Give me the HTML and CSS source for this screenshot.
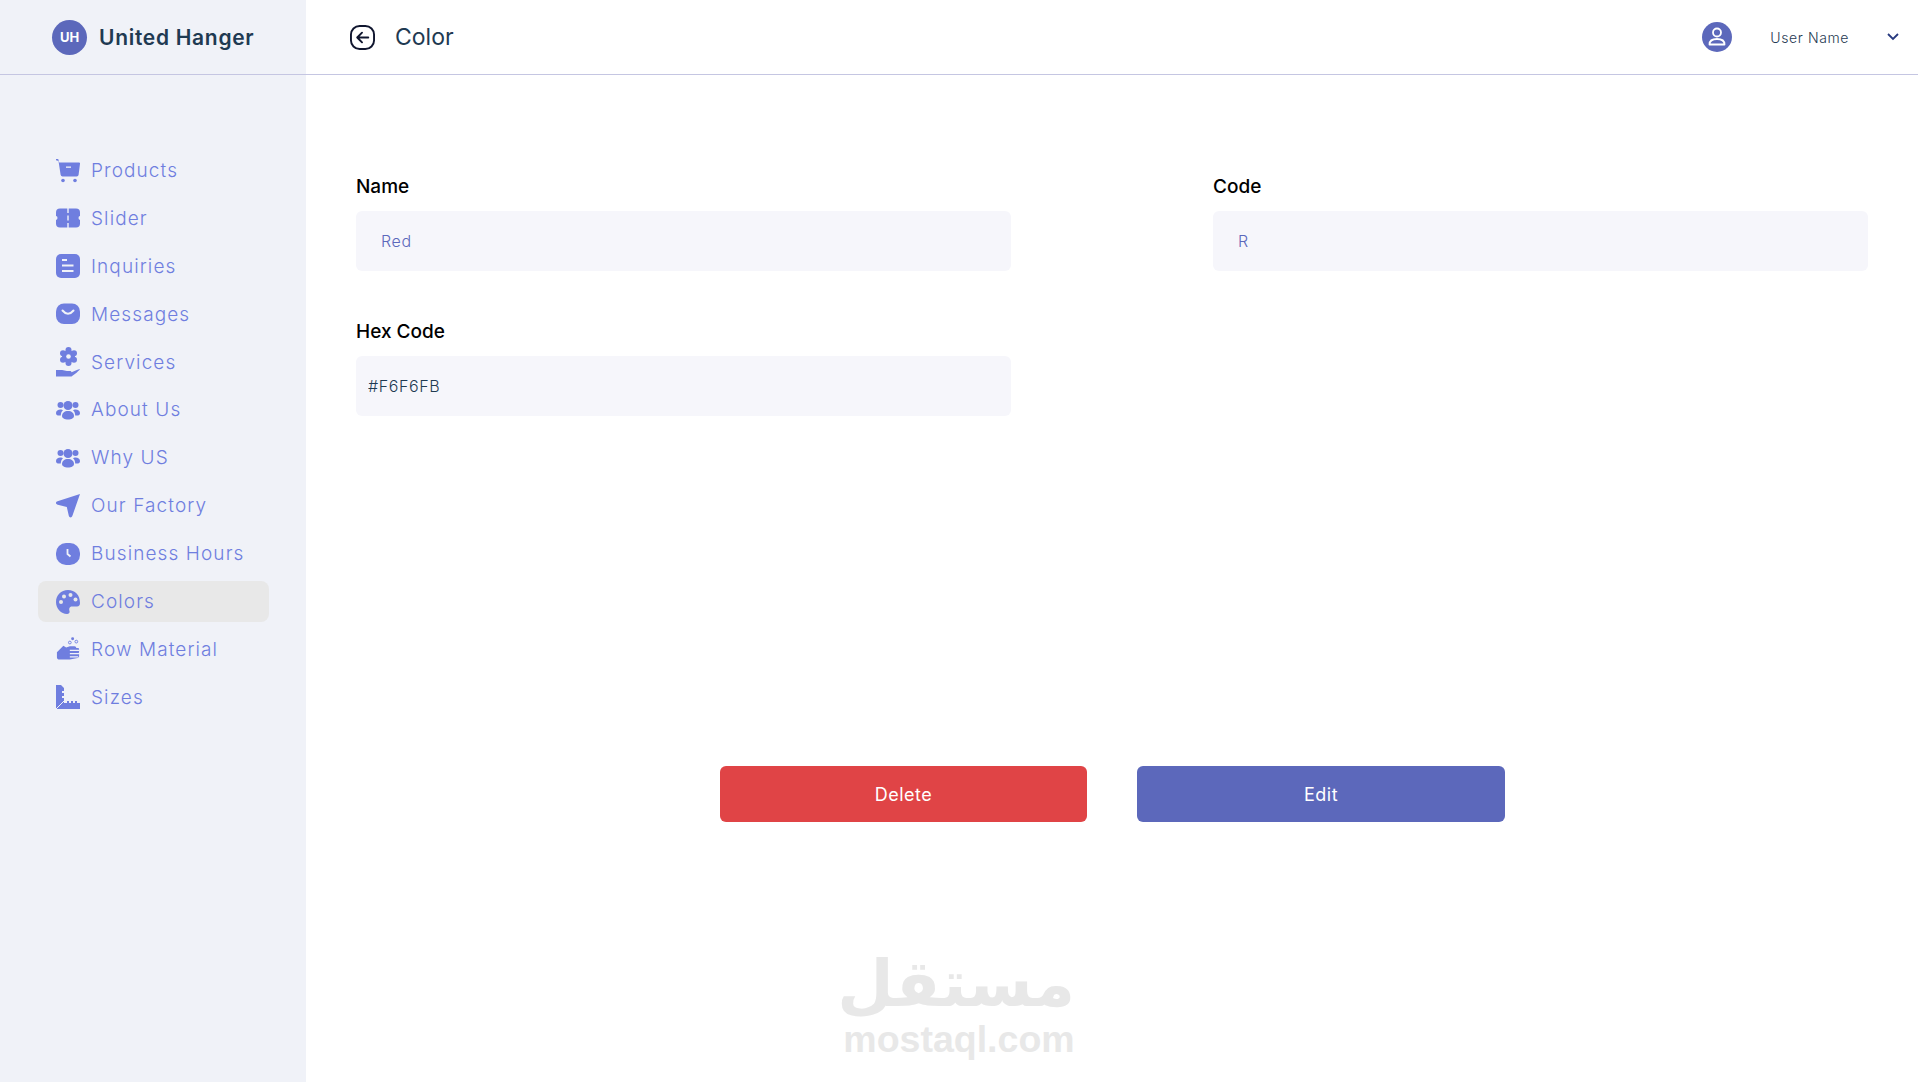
FILE: index.html
```html
<!DOCTYPE html>
<html lang="en">
<head>
  <meta charset="UTF-8">
  <meta name="viewport" content="width=device-width, initial-scale=1.0">
  <title>Color | United Hanger</title>
  <link rel="stylesheet" href="styles.css">
</head>
<body>
  <div class="app">
    <aside class="sidebar">
      <div class="brand">
        <span class="brand-logo">UH</span>
        <span class="brand-name">United Hanger</span>
      </div>
      <nav class="menu">
        <a class="menu-item" href="#">
          <svg class="menu-icon" viewBox="0 0 24 24"><path d="M0 0h2.200l1 3.500H23a1 1 0 0 1 1 1.200l-1.400 11a2 2 0 0 1-2 1.800H6.600a2 2 0 0 1-2-1.700L2.500 2 0 1.200z"/><rect x="10" y="7.500" width="5" height="1.300" fill="#f0f2f8"/><circle cx="7" cy="21.500" r="1.800"/><circle cx="19" cy="21.500" r="1.800"/></svg>
          Products
        </a>
        <a class="menu-item" href="#">
          <svg class="menu-icon" viewBox="0 0 24 24"><rect y="2.500" width="24" height="19" rx="4"/><g fill="#f0f2f8"><circle cx="-.5" cy="12" r="2"/><circle cx="24.500" cy="12" r="2"/><rect x="11.300" y="2" width="1.400" height="5"/><rect x="11.300" y="9.500" width="1.400" height="5"/><rect x="11.300" y="17" width="1.400" height="5"/></g></svg>
          Slider
        </a>
        <a class="menu-item" href="#">
          <svg class="menu-icon" viewBox="0 0 24 24"><rect width="24" height="24" rx="5"/><path d="M6 5h5v2H6zM6 10.500h11.500v2H6zM6 16h11.500v2H6z" fill="#f0f2f8"/></svg>
          Inquiries
        </a>
        <a class="menu-item" href="#">
          <svg class="menu-icon" viewBox="0 0 24 24"><rect y="1.500" width="24" height="20.500" rx="8"/><path d="M6.500 8.500Q12 15 17.500 8.500" fill="none" stroke="#f0f2f8" stroke-width="2" stroke-linecap="round"/></svg>
          Messages
        </a>
        <a class="menu-item" href="#">
          <svg class="menu-icon menu-icon-tall" viewBox="0 0 24 30"><g><circle cx="12.500" cy="9.500" r="6.500"/><circle cx="12.500" cy="3" r="3"/><circle cx="12.500" cy="16" r="3"/><circle cx="7" cy="6.200" r="3"/><circle cx="18" cy="6.200" r="3"/><circle cx="7" cy="12.800" r="3"/><circle cx="18" cy="12.800" r="3"/></g><circle cx="12.500" cy="9.500" r="2.300" fill="#f0f2f8"/><path d="M0 23h6c2 0 3 1 5 1h3c1 0 1.500 .6 1.500 1.300l6-2.600 2.500-.7c-.5 1.500-5 5-8.500 7.500H0z"/></svg>
          Services
        </a>
        <a class="menu-item" href="#">
          <svg class="menu-icon" viewBox="0 0 24 24"><use href="#people"/></svg>
          About Us
        </a>
        <a class="menu-item" href="#">
          <svg class="menu-icon" viewBox="0 0 24 24"><use href="#people"/></svg>
          Why US
        </a>
        <a class="menu-item" href="#">
          <svg class="menu-icon" viewBox="0 0 24 24"><path d="M24 0 16.500 21.500c-.8 2.500-3 2.500-3.700 .2L10.800 13 1.800 10.700C-.6 10-.6 8 1.500 7.200z"/></svg>
          Our Factory
        </a>
        <a class="menu-item" href="#">
          <svg class="menu-icon" viewBox="0 0 24 24"><rect y="1" width="24" height="22" rx="10"/><path d="M11.500 7v5l3 2.500" fill="none" stroke="#f0f2f8" stroke-width="1.800"/></svg>
          Business Hours
        </a>
        <a class="menu-item is-active" href="#">
          <svg class="menu-icon" viewBox="0 0 24 24"><path d="M12 0C5 0 0 5.200 0 12s5.200 12 11 12c2 0 3-1.400 2.500-3-.6-2-.3-4.500 2.500-4.500h5c2 0 3-1.500 3-3.500C24 5 19 0 12 0z"/><g fill="#e8e8e8"><circle cx="5" cy="12" r="2"/><circle cx="8" cy="6.500" r="2"/><circle cx="14.500" cy="5" r="2"/><circle cx="19.500" cy="9.500" r="2"/></g></svg>
          Colors
        </a>
        <a class="menu-item" href="#">
          <svg class="menu-icon" viewBox="0 0 24 26"><path d="M0 16.500 7 9.500l3 2 4-1.500h5q2 .3 2 2h2q1 0 1 1.500v2.500q0 1-.5 1.500.5.500.5 1.500v2q-1 2-3 2l-7 1.500H3q-3 0-3-2.500z"/><path d="M14 14.500h10M14 18h10M14 21.500h9" stroke="#f0f2f8" stroke-width="1.200"/><circle cx="17" cy="1.800" r="1.600"/><circle cx="14" cy="6" r="1.500" fill="none" stroke="#6f7edf"/><circle cx="21" cy="5" r="1.500" fill="none" stroke="#6f7edf"/></svg>
          Row Material
        </a>
        <a class="menu-item" href="#">
          <svg class="menu-icon" viewBox="0 0 24 24"><path d="M0 0H5L8 3V6H6V8H8V11H6V13H8V18H11V16H13V18H15V16H17V18H19V16H21V18H24V24H0z"/><path d="M0 24 8 16" stroke="#f0f2f8" stroke-width="1"/></svg>
          Sizes
        </a>
      </nav>
    </aside>

    <div class="content">
      <header class="topbar">
        <div class="page-title">
          <svg class="back-icon" viewBox="0 0 26 26"><rect x="1" y="1" width="24" height="24" rx="9"/><path d="M19 13H7.500M12.500 8l-5 5 5 5"/></svg>
          <h1>Color</h1>
        </div>
        <div class="user">
          <svg class="user-icon" viewBox="0 0 30 30"><circle cx="15" cy="15" r="15" fill="#5c68bb"/><circle cx="15" cy="10.500" r="4" fill="none" stroke="#fff" stroke-width="1.800"/><path d="M7.500 22.500c0-3.500 3-5.500 7.500-5.500s7.500 2 7.500 5.500z" fill="none" stroke="#fff" stroke-width="1.800" stroke-linejoin="round"/></svg>
          <span class="user-name">User Name</span>
          <svg class="chevron" viewBox="0 0 12 8"><path d="M1 1l5 5 5-5"/></svg>
        </div>
      </header>

      <main class="form-page">
        <div class="form-grid">
          <div class="field">
            <label for="name">Name</label>
            <input class="is-accent" id="name" type="text" value="Red" readonly>
          </div>
          <div class="field">
            <label for="code">Code</label>
            <input class="is-accent" id="code" type="text" value="R" readonly>
          </div>
          <div class="field">
            <label for="hex">Hex Code</label>
            <input id="hex" type="text" value="#F6F6FB" readonly>
          </div>
        </div>
        <div class="actions">
          <button class="btn btn-delete">Delete</button>
          <button class="btn btn-edit">Edit</button>
        </div>
      </main>
    </div>
  </div>

  <div class="watermark">
    <div class="watermark-ar" lang="ar" dir="rtl">مستقل</div>
    <div class="watermark-en">mostaql.com</div>
  </div>

  <svg class="icon-defs" width="0" height="0">
    <symbol id="people" viewBox="0 0 24 24">
      <circle cx="12" cy="7.500" r="4.500"/>
      <circle cx="4.500" cy="7" r="3"/>
      <circle cx="19.500" cy="7" r="3"/>
      <path d="M0 15c0-2 2-3.500 4.500-3.500 1 0 2 .3 2.500.8-1.500 1.200-2.200 3-2.200 5.200H2c-1.200 0-2-1-2-2.500z"/>
      <path d="M24 15c0-2-2-3.500-4.500-3.500-1 0-2 .3-2.500.8 1.500 1.200 2.200 3 2.200 5.200H22c1.200 0 2-1 2-2.500z"/>
      <path d="M6 18c0-3 2.500-5 6-5s6 2 6 5c0 2-2.500 3.500-6 3.500S6 20 6 18z"/>
    </symbol>
  </svg>
</body>
</html>
```

FILE: styles.css
```css
* {
  box-sizing: border-box;
}
body {
  margin: 0;
  background-color: #fff;
  font-family: 'Inter', sans-serif;
  color: #1f3a52;
}
.app {
  display: flex;
  height: 1082px;
  overflow: hidden;
}
.sidebar {
  width: 306px;
  flex-shrink: 0;
  background-color: #f0f2f8;
}
.brand {
  display: flex;
  align-items: center;
  gap: 12px;
  height: 75px;
  padding-left: 52px;
  border-bottom: 1px solid #c5c6e2;
}
.brand-logo {
  display: flex;
  align-items: center;
  justify-content: center;
  width: 35px;
  height: 35px;
  border-radius: 50%;
  background-color: #5c68bb;
  color: #fff;
  font-size: 13px;
  font-weight: 700;
}
.brand-name {
  font-size: 21px;
  font-weight: 600;
  letter-spacing: 0.7px;
}
.menu {
  display: flex;
  flex-direction: column;
  gap: 6.9px;
  padding: 75px 37px 0 38px;
}
.menu-item {
  display: flex;
  align-items: center;
  gap: 11px;
  height: 41px;
  padding-left: 18px;
  border-radius: 8px;
  color: #6f7edf;
  font-size: 19px;
  font-weight: 300;
  letter-spacing: 1.1px;
  text-decoration: none;
}
.menu-item.is-active {
  background-color: #e8e8e8;
}
.menu-icon {
  width: 24px;
  height: 24px;
  flex-shrink: 0;
  fill: #6f7edf;
}
.menu-icon-tall {
  height: 30px;
}
.content {
  flex: 1;
  min-width: 0;
}
.topbar {
  display: flex;
  align-items: center;
  justify-content: space-between;
  height: 75px;
  padding: 0 19px 0 44px;
  border-bottom: 1px solid #c5c6e2;
}
.page-title {
  display: flex;
  align-items: center;
  gap: 20px;
}
.page-title h1 {
  margin: 0;
  font-size: 23px;
  font-weight: 400;
}
.back-icon {
  width: 25px;
  height: 25px;
  fill: none;
  stroke: #10162f;
  stroke-width: 2;
  stroke-linecap: round;
  stroke-linejoin: round;
}
.user {
  display: flex;
  align-items: center;
}
.user-icon {
  width: 30px;
  height: 30px;
  margin-right: 38px;
}
.user-name {
  margin-right: 38px;
  font-size: 14px;
  font-weight: 300;
  letter-spacing: 0.6px;
}
.chevron {
  width: 12px;
  height: 8px;
  fill: none;
  stroke: #27397f;
  stroke-width: 1.800;
}
.form-page {
  padding: 100px 50px 0;
}
.form-grid {
  display: grid;
  grid-template-columns: 655px 655px;
  justify-content: space-between;
  row-gap: 49px;
}
.field label {
  display: block;
  height: 24px;
  margin-bottom: 12px;
  line-height: 24px;
  color: #000;
  font-size: 19px;
  font-weight: 500;
}
.field input {
  display: block;
  width: 100%;
  height: 60px;
  padding: 0 12px;
  border: none;
  border-radius: 6px;
  outline: none;
  background-color: #f6f6fb;
  color: #1f3a52;
  font-family: 'Inter', sans-serif;
  font-size: 16px;
  font-weight: 300;
  letter-spacing: 0.6px;
}
.field input.is-accent {
  padding-left: 25px;
  color: #5c68bb;
}
.actions {
  display: flex;
  justify-content: center;
  gap: 50px;
  margin-top: 350px;
  padding-left: 1px;
}
.btn {
  width: 367px;
  height: 56px;
  border: none;
  border-radius: 6px;
  color: #fff;
  font-family: 'Inter', sans-serif;
  font-size: 18px;
  font-weight: 400;
  letter-spacing: 0.5px;
  cursor: pointer;
}
.btn-delete {
  background-color: #e04446;
}
.btn-edit {
  width: 368px;
  background-color: #5c68bb;
}
.watermark {
  position: absolute;
  left: 843px;
  top: 946px;
  width: 232px;
  color: #e8e8e8;
  text-align: center;
  pointer-events: none;
}
.watermark-ar {
  height: 75px;
  line-height: 75px;
  font-family: 'DejaVu Sans', sans-serif;
  font-size: 65px;
  font-weight: 700;
  white-space: nowrap;
}
.watermark-en {
  font-family: 'Liberation Sans', sans-serif;
  font-size: 37.5px;
  font-weight: 700;
  line-height: 36px;
}
.icon-defs {
  position: absolute;
}
```
